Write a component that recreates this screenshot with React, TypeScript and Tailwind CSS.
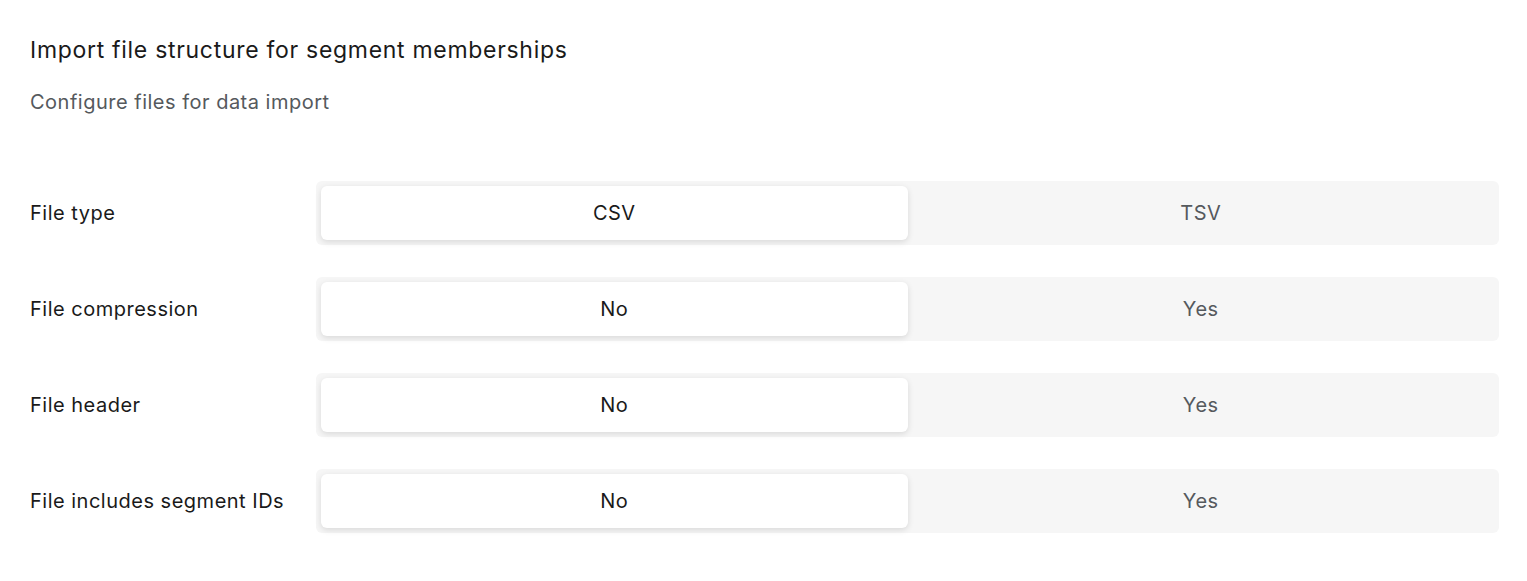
import React, { useState } from 'react';

interface IToggleRow {
  label: string;
  options: [string, string];
}

const rows: IToggleRow[] = [
  { label: 'File type', options: ['CSV', 'TSV'] },
  { label: 'File compression', options: ['No', 'Yes'] },
  { label: 'File header', options: ['No', 'Yes'] },
  { label: 'File includes segment IDs', options: ['No', 'Yes'] },
];

const Segmented = ({ options }: { options: [string, string] }) => {
  const [active, setActive] = useState(0);
  return (
    <div className="flex flex-1 h-16 p-[5px] bg-[#f6f6f6] rounded-md">
      {options.map((opt, i) => (
        <button
          key={opt}
          onClick={() => setActive(i)}
          className={
            i === active
              ? 'flex-1 flex items-center justify-center rounded-md bg-white shadow-[0_2px_6px_rgba(0,0,0,0.12)] text-[20px] tracking-[0.5px] text-[#1a1a1a]'
              : 'flex-1 flex items-center justify-center rounded-md text-[20px] tracking-[0.5px] text-[#55595d]'
          }
        >
          {opt}
        </button>
      ))}
    </div>
  );
};

const App = () => {
  return (
    <div
      className="min-h-screen bg-white pl-[30px] pr-[28px] pt-[36px] text-[#1a1a1a]"
      style={{ fontFamily: 'Inter, "Noto Sans", sans-serif' }}
    >
      <h2 className="text-[23px] leading-[28px] tracking-[0.7px]">
        Import file structure for segment memberships
      </h2>
      <p className="mt-[26px] text-[20px] leading-[24px] tracking-[0.5px] text-[#55595d]">
        Configure files for data import
      </p>
      <div className="mt-[67px] flex flex-col gap-8">
        {rows.map((row) => (
          <div key={row.label} className="flex items-center">
            <label className="w-[286px] shrink-0 text-[20px] tracking-[0.5px]">
              {row.label}
            </label>
            <Segmented options={row.options} />
          </div>
        ))}
      </div>
    </div>
  );
};

export default App;
